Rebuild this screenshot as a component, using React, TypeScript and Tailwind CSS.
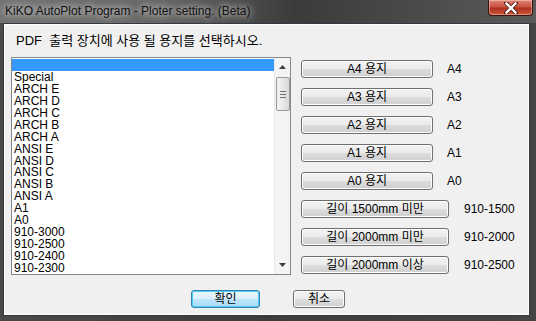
import React from 'react';

const listItems = [
  '',
  'Special',
  'ARCH E',
  'ARCH D',
  'ARCH C',
  'ARCH B',
  'ARCH A',
  'ANSI E',
  'ANSI D',
  'ANSI C',
  'ANSI B',
  'ANSI A',
  'A1',
  'A0',
  '910-3000',
  '910-2500',
  '910-2400',
  '910-2300',
];

const paperButtons = [
  { label: 'A4 용지', value: 'A4', wide: false },
  { label: 'A3 용지', value: 'A3', wide: false },
  { label: 'A2 용지', value: 'A2', wide: false },
  { label: 'A1 용지', value: 'A1', wide: false },
  { label: 'A0 용지', value: 'A0', wide: false },
  { label: '길이 1500mm 미만', value: '910-1500', wide: true },
  { label: '길이 2000mm 미만', value: '910-2000', wide: true },
  { label: '길이 2000mm 이상', value: '910-2500', wide: true },
];

const font = { fontFamily: '"Liberation Sans", "Noto Sans CJK KR", sans-serif' };

const WinButton: React.FC<{ className?: string; primary?: boolean; children: React.ReactNode }> = ({
  className = '',
  primary,
  children,
}) => (
  <button
    className={`h-[18px] rounded-[3px] border text-[12px] leading-[14px] text-black flex items-center justify-center ${
      primary
        ? 'border-[#3c7fb1] bg-[linear-gradient(#eaf6fd_0%,#d9f0fc_50%,#bee6fd_51%,#a7d9f5_100%)] shadow-[inset_0_0_0_1px_#48d0f9]'
        : 'border-[#707070] bg-[linear-gradient(#f2f2f2_0%,#ebebeb_50%,#dddddd_51%,#cfcfcf_100%)] shadow-[inset_0_0_0_1px_#fcfcfc]'
    } ${className}`}
  >
    {children}
  </button>
);

export default function App() {
  return (
    <div
      className="w-[536px] h-[321px] flex flex-col overflow-hidden bg-[linear-gradient(90deg,#4a4a4a_0%,#3c3c3c_50%,#454545_100%)]"
      style={font}
    >
      {/* title bar */}
      <div className="h-[23px] flex items-start relative bg-[linear-gradient(90deg,#727272_0%,#666666_30%,#3b3b3b_55%,#4c4c4c_80%,#5a5a5a_100%)]">
        <span className="pl-[5px] pt-[4px] text-[12px] leading-[15px] text-[#111] [text-shadow:0_0_6px_rgba(255,255,255,0.8),0_0_12px_rgba(255,255,255,0.6)]">
          KiKO AutoPlot Program - Ploter setting. (Beta)
        </span>
        <div className="absolute left-[488px] top-0 w-[45px] h-[16px] rounded-b-[4px] border border-t-0 border-[#3a1410] bg-[linear-gradient(#e0867a_0%,#c7513f_45%,#b03020_55%,#c95a3a_100%)] shadow-[inset_0_0_0_1px_rgba(255,220,210,0.45)] flex items-center justify-center">
          <svg width="14" height="12" viewBox="0 0 14 12">
            <path d="M2 1 L12 11 M12 1 L2 11" stroke="#4a1a12" strokeWidth="4" strokeLinecap="square" />
            <path d="M2.5 1.5 L11.5 10.5 M11.5 1.5 L2.5 10.5" stroke="#ffffff" strokeWidth="2.4" strokeLinecap="square" />
          </svg>
        </div>
      </div>

      {/* body */}
      <div className="ml-[3px] mr-[6px] h-[293px] bg-[#f0f0f0] border border-[#2f3a44] shadow-[inset_0_0_0_1px_#ffffff] flex flex-col pl-[7px] pt-[9px]">
        <div className="pl-[5px] h-[16px] text-[13px] leading-[16px] text-black whitespace-pre">
          PDF  출력 장치에 사용 될 용지를 선택하시오.
        </div>

        <div className="flex mt-[8px]">
          {/* list box */}
          <div className="w-[280px] h-[218px] border border-[#828790] bg-white flex">
            <div className="flex-1 flex flex-col pt-[1px]">
              {listItems.map((item, i) => (
                <div
                  key={i}
                  className={`h-[12px] pl-[2px] text-[12px] leading-[12px] text-black whitespace-nowrap overflow-hidden ${
                    i === 0 ? 'bg-[#3399ff]' : ''
                  }`}
                >
                  {item}
                </div>
              ))}
            </div>
            <div className="w-[16px] bg-[#f4f4f4] border-l border-[#e8e8e8] flex flex-col items-center">
              <div className="h-[18px] w-full flex items-center justify-center">
                <svg width="7" height="4" viewBox="0 0 7 4">
                  <path d="M0 4 L3.5 0 L7 4 Z" fill="#404040" />
                </svg>
              </div>
              <div className="mt-[1px] w-[14px] h-[34px] rounded-[2px] border border-[#9a9a9a] bg-[linear-gradient(90deg,#f4f4f4_0%,#e8e8e8_50%,#d6d6d6_100%)] flex flex-col items-center justify-center gap-[2px]">
                <div className="w-[6px] h-[1px] bg-[#707070]" />
                <div className="w-[6px] h-[1px] bg-[#707070]" />
                <div className="w-[6px] h-[1px] bg-[#707070]" />
              </div>
              <div className="flex-1" />
              <div className="h-[18px] w-full flex items-center justify-center">
                <svg width="7" height="4" viewBox="0 0 7 4">
                  <path d="M0 0 L7 0 L3.5 4 Z" fill="#404040" />
                </svg>
              </div>
            </div>
          </div>

          {/* paper buttons */}
          <div className="ml-[10px] pt-[3px] flex flex-col gap-[10px]">
            {paperButtons.map((b) => (
              <div key={b.value} className="flex items-center h-[18px]">
                <WinButton className={b.wide ? 'w-[148px]' : 'w-[132px]'}>{b.label}</WinButton>
                <span className={`text-[12px] leading-[14px] text-black ${b.wide ? 'ml-[15px]' : 'ml-[14px]'}`}>
                  {b.value}
                </span>
              </div>
            ))}
          </div>
        </div>

        <div className="flex mt-[15px]">
          <WinButton primary className="ml-[180px] w-[69px]">
            확인
          </WinButton>
          <WinButton className="ml-[33px] w-[52px]">취소</WinButton>
        </div>
      </div>
    </div>
  );
}
